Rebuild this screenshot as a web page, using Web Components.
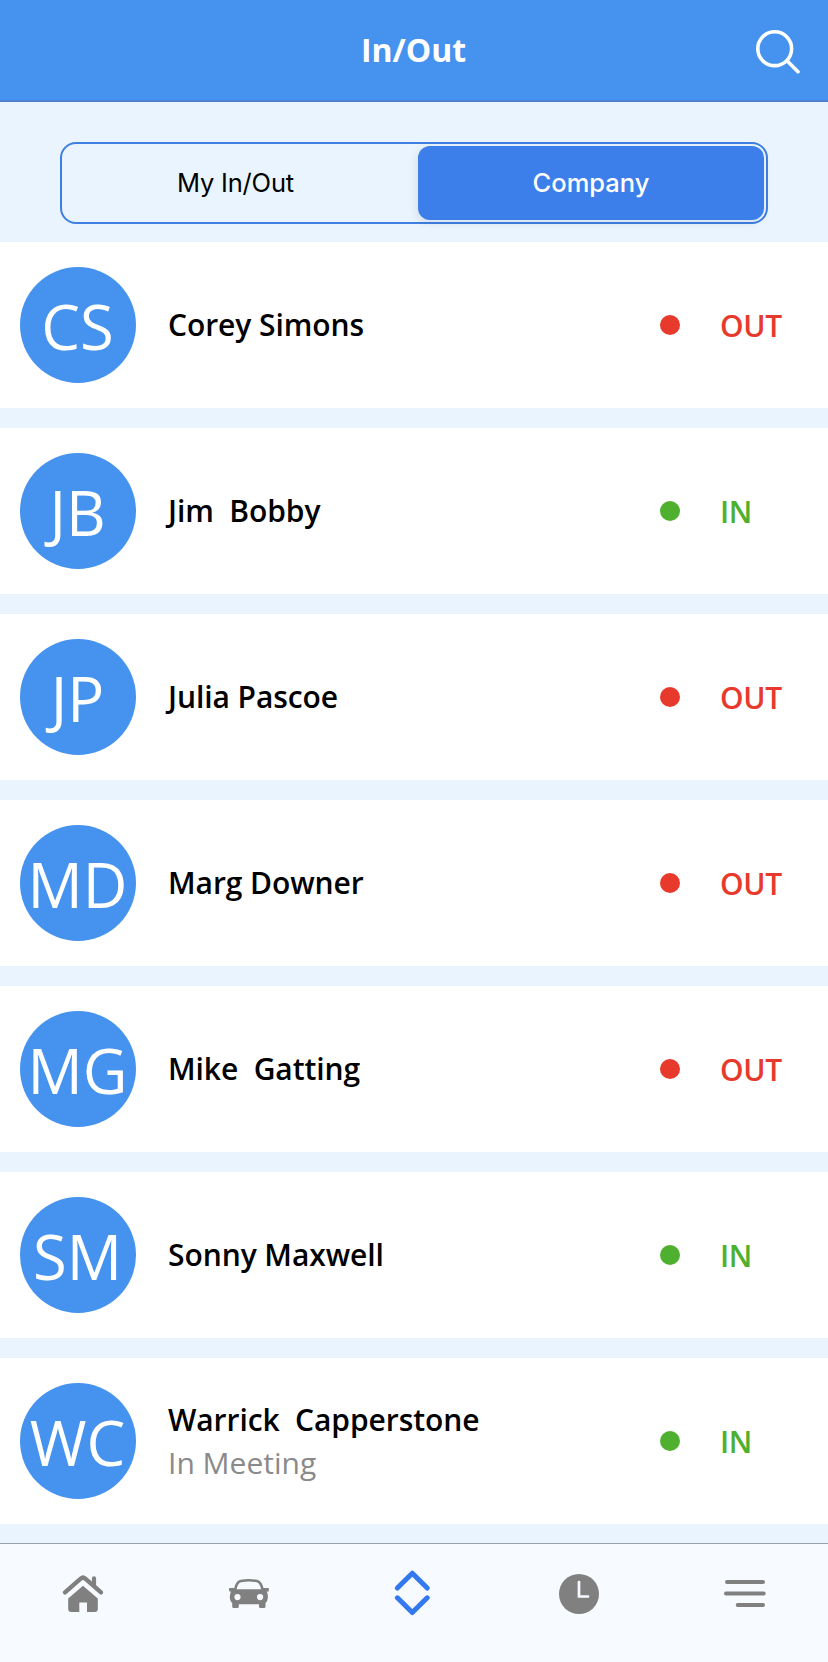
<!DOCTYPE html>
<html lang="en">
<head>
<meta charset="utf-8">
<meta name="viewport" content="width=device-width, initial-scale=1">
<title>In/Out</title>
<style>
    html, body {
        margin: 0;
        height: 100%;
    }
    body {
        --blue: #4593ee;
        --accent: #3c7eea;
        --pale: #e9f4fe;
        font-family: 'Open Sans', 'Noto Sans', sans-serif;
        background: var(--pale);
        overflow: hidden;
    }
</style>
</head>
<body>

<in-out-app>
    <app-header slot="header">In/Out</app-header>
    <segment-control slot="filter">
        <segment-button>My In/Out</segment-button>
        <segment-button active>Company</segment-button>
    </segment-control>

    <staff-row initials="CS" status="OUT">Corey Simons</staff-row>
    <staff-row initials="JB" status="IN">Jim  Bobby</staff-row>
    <staff-row initials="JP" status="OUT">Julia Pascoe</staff-row>
    <staff-row initials="MD" status="OUT">Marg Downer</staff-row>
    <staff-row initials="MG" status="OUT">Mike  Gatting</staff-row>
    <staff-row initials="SM" status="IN">Sonny Maxwell</staff-row>
    <staff-row initials="WC" status="IN">Warrick  Capperstone<span slot="note">In Meeting</span></staff-row>

    <tab-bar slot="tabs">
        <tab-item icon="home"></tab-item>
        <tab-item icon="car"></tab-item>
        <tab-item icon="inout" active></tab-item>
        <tab-item icon="clock"></tab-item>
        <tab-item icon="menu"></tab-item>
    </tab-bar>
</in-out-app>

<script>
/**
 * small helper: every component gets an open shadow root
 * filled from its own template
 */
function render(host, html) {
    const template = document.createElement('template')
    template.innerHTML = html
    host.attachShadow({ mode: 'open' })
    host.shadowRoot.appendChild(template.content.cloneNode(true))
}

class InOutApp extends HTMLElement {
    constructor() {
        super()
        render(this, `
            <style>
                :host {
                    display: flex;
                    flex-direction: column;
                    height: 100vh;
                }
                .filter {
                    padding: 40px 60px 18px;
                }
                .list {
                    flex: 1;
                    min-height: 0;
                    display: flex;
                    flex-direction: column;
                    gap: 20px;
                    overflow: hidden;
                }
            </style>
            <slot name="header"></slot>
            <div class="filter"><slot name="filter"></slot></div>
            <div class="list"><slot></slot></div>
            <slot name="tabs"></slot>
        `)
    }
}

class AppHeader extends HTMLElement {
    constructor() {
        super()
        render(this, `
            <style>
                :host {
                    display: grid;
                    grid-template-columns: 1fr auto 1fr;
                    align-items: center;
                    height: 100px;
                    background: var(--blue);
                    border-bottom: 2px solid #4e7fd0;
                    color: #fff;
                }
                h1 {
                    grid-column: 2;
                    margin: 0;
                    padding-right: 1px;
                    font-size: 32px;
                    font-weight: 700;
                    line-height: 44px;
                }
                svg {
                    justify-self: end;
                    margin: 4px 28px 0 0;
                }
            </style>
            <h1><slot></slot></h1>
            <svg width="48" height="48" fill="none" stroke="#fff" stroke-width="3.6" stroke-linecap="round">
                <circle cx="22.7" cy="20.7" r="16.9"/>
                <path d="M35.3 33L46 43.7"/>
            </svg>
        `)
    }
}

class SegmentControl extends HTMLElement {
    constructor() {
        super()
        render(this, `
            <style>
                :host {
                    display: flex;
                    box-sizing: border-box;
                    height: 82px;
                    padding: 2px;
                    border: 2px solid #3f7fe2;
                    border-radius: 16px;
                }
            </style>
            <slot></slot>
        `)
    }
}

class SegmentButton extends HTMLElement {
    constructor() {
        super()
        render(this, `
            <style>
                :host {
                    display: flex;
                    flex: 1;
                    align-items: center;
                    justify-content: center;
                    padding: 0 11px 2px 0;
                    border-radius: 12px;
                    font: 400 25.5px Inter, sans-serif;
                    letter-spacing: -.2px;
                    color: #000;
                }
                :host([active]) {
                    flex: 0 0 346px;
                    padding-right: 0;
                    background: var(--accent);
                    box-shadow: -2px 3px 10px rgba(0, 0, 0, .08);
                    color: #fff;
                    font-weight: 500;
                    letter-spacing: 0;
                    box-sizing: border-box;
                }
            </style>
            <span><slot></slot></span>
        `)
    }
}

/**
 * one person in the list, the default slot is the name and
 * the optional note is shown below it
 */
class StaffRow extends HTMLElement {
    constructor() {
        super()
        render(this, `
            <style>
                :host {
                    display: flex;
                    flex: none;
                    align-items: center;
                    box-sizing: border-box;
                    height: 166px;
                    padding: 0 20px;
                    background: #fff;
                }
                .avatar {
                    display: flex;
                    align-items: center;
                    justify-content: center;
                    box-sizing: border-box;
                    width: 116px;
                    height: 116px;
                    padding: 2px 1px 0 0;
                    border-radius: 50%;
                    background: var(--blue);
                    color: #fff;
                    font-size: 61.5px;
                    line-height: 84px;
                }
                .text {
                    flex: 1;
                    margin-left: 32px;
                    font-size: 30px;
                    line-height: 43px;
                    white-space: pre;
                }
                .name {
                    font-weight: 600;
                    letter-spacing: -.07px;
                    color: #000;
                }
                .note {
                    color: #8a8a8a;
                }
                /* a lone name sits a touch above the middle */
                .text.single {
                    padding-bottom: 2px;
                }
                .status {
                    display: flex;
                    align-items: center;
                    gap: 40px;
                    width: 148px;
                    font-size: 30px;
                    font-weight: 600;
                    line-height: 41px;
                    color: #e8392d;
                }
                .status::before {
                    content: '';
                    width: 20px;
                    height: 20px;
                    border-radius: 50%;
                    background: currentColor;
                }
                .label {
                    letter-spacing: -.3px;
                }
                :host([status='IN']) .status {
                    color: #4fb02f;
                }
            </style>
            <div class="avatar"><span class="initials"></span></div>
            <div class="text">
                <div class="name"><slot></slot></div><div class="note"><slot name="note"></slot></div>
            </div>
            <div class="status"><span class="label"></span></div>
        `.replace(/>\s+</g, '><'))
    }

    connectedCallback() {
        this.shadowRoot.querySelector('.initials').textContent = this.getAttribute('initials')
        this.shadowRoot.querySelector('.label').textContent = this.getAttribute('status')
        if (!this.querySelector('[slot=note]')) {
            this.shadowRoot.querySelector('.text').classList.add('single')
        }
    }
}

class TabBar extends HTMLElement {
    constructor() {
        super()
        render(this, `
            <style>
                :host {
                    display: flex;
                    box-sizing: border-box;
                    height: 119px;
                    border-top: 1px solid #98a2ab;
                    background: #f7fbff;
                }
            </style>
            <slot></slot>
        `)
    }
}

// 48x48 drawings, all of them use currentColor
const icons = {
    home: `
        <path d="M6 22.3L21.7 8.6Q24 6.6 26.3 8.6L42 22.3" fill="none" stroke="currentColor" stroke-width="4.4" stroke-linecap="round" stroke-linejoin="round"/>
        <path d="M35 8.4V15" stroke="currentColor" stroke-width="4.2" stroke-linecap="round"/>
        <path d="M24 15.8L38.8 28.6V39Q38.8 42 35.8 42H28V32.4H20.3V42H12.2Q9.2 42 9.2 39V28.6Z"/>`,
    car: `
        <g transform="translate(.8 0)">
            <path d="M10.4 20C11.2 14 13.5 11.6 16 11Q24 9.4 32 11C34.5 11.6 36.8 14 37.8 20" fill="none" stroke="currentColor" stroke-width="2.6"/>
            <path fill-rule="evenodd" d="M4.3 18H9.5L11.5 19.3H36.5L38.7 18H44V21.4H42Q43.4 24.5 43 28Q42.8 31.5 40.7 33.2V36.5Q40.7 38 39.2 38H35.7Q34.2 38 34.2 36.5V34.2H14V36.5Q14 38 12.5 38H9Q7.4 38 7.4 36.5V33.2Q5.4 31.5 5 28Q4.8 24.5 6.2 21.4H4.3ZM12.7 24A3.1 3.1 0 1 0 12.7 30.2A3.1 3.1 0 1 0 12.7 24ZM35.3 24A3.1 3.1 0 1 0 35.3 30.2A3.1 3.1 0 1 0 35.3 24Z"/>
        </g>`,
    inout: `
        <path d="M7.4 18L22.3 3.2L37.2 18M7.4 27.8L22.3 42.6L37.2 27.8" fill="none" stroke="currentColor" stroke-width="5" stroke-linecap="round" stroke-linejoin="round"/>`,
    clock: `
        <circle cx="23" cy="24" r="20"/>
        <path d="M23 12V26.5H32" fill="none" stroke="#f7fbff" stroke-width="2.7" stroke-linecap="round"/>`,
    menu: `
        <path d="M6 12H42M5 23.5H42.7M16.7 35H42" stroke="currentColor" stroke-width="4" stroke-linecap="round"/>`
}

class TabItem extends HTMLElement {
    constructor() {
        super()
        render(this, `
            <style>
                :host {
                    display: flex;
                    flex: 1;
                    justify-content: center;
                    padding-top: 26px;
                    color: #808080;
                }
                :host([active]) {
                    color: #3478f0;
                }
            </style>
            <svg width="48" height="48" fill="currentColor"></svg>
        `)
    }

    connectedCallback() {
        this.shadowRoot.querySelector('svg').innerHTML = icons[this.getAttribute('icon')]
    }
}

window.customElements.define('in-out-app', InOutApp)
window.customElements.define('app-header', AppHeader)
window.customElements.define('segment-control', SegmentControl)
window.customElements.define('segment-button', SegmentButton)
window.customElements.define('staff-row', StaffRow)
window.customElements.define('tab-bar', TabBar)
window.customElements.define('tab-item', TabItem)
</script>
</body>
</html>
